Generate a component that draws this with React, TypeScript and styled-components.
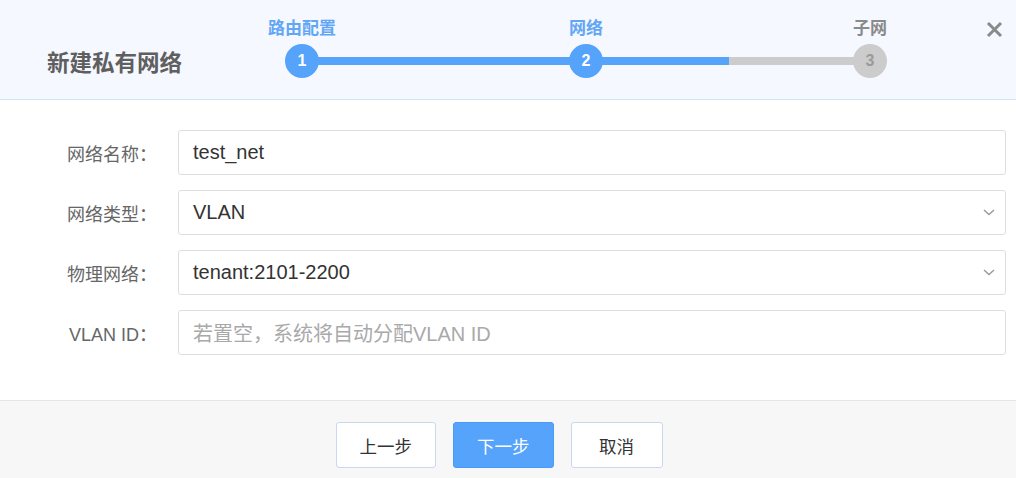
import React from "react";
import styled, { createGlobalStyle } from "styled-components";

const GlobalStyle = createGlobalStyle`
  html, body { margin: 0; padding: 0; background: #ffffff; }
  body { font-family: "Liberation Sans", "Noto Sans CJK SC", sans-serif; }
  * { box-sizing: border-box; }
`;

const BLUE = "#55a3fb";

const Dialog = styled.div`
  width: 1016px;
  height: 478px;
  display: flex;
  flex-direction: column;
  background: #ffffff;
  overflow: hidden;
`;

const Header = styled.div`
  height: 100px;
  flex: none;
  display: flex;
  align-items: flex-end;
  padding: 0 0 21px 47px;
  background: #f5f8ff;
  border-bottom: 1px solid #d3e1f5;
`;

const Title = styled.div`
  width: 238px;
  line-height: 34px;
  font-size: 22.5px;
  font-weight: 700;
  color: #5f5f5f;
  font-family: "Noto Sans CJK SC", sans-serif;
`;

const Stepper = styled.div`
  width: 602px;
  display: flex;
  align-items: flex-end;
`;

const Step = styled.div`
  width: 34px;
  flex: none;
  display: flex;
  flex-direction: column;
  align-items: center;
  gap: 7px;
`;

const StepLabel = styled.div<{ $active: boolean }>`
  white-space: nowrap;
  font-family: "Noto Sans CJK SC", sans-serif;
  font-size: 17px;
  line-height: 20px;
  font-weight: 700;
  color: ${(p) => (p.$active ? "#62a6f6" : "#8a8a8a")};
`;

const Circle = styled.div<{ $active: boolean }>`
  width: 34px;
  height: 34px;
  border-radius: 50%;
  display: flex;
  align-items: center;
  justify-content: center;
  font-family: "Liberation Sans", sans-serif;
  font-size: 16px;
  font-weight: 700;
  background: ${(p) => (p.$active ? BLUE : "#cccccc")};
  color: ${(p) => (p.$active ? "#ffffff" : "#9a9a9a")};
`;

const Connector = styled.div<{ $fill: number }>`
  flex: 1;
  height: 8px;
  margin: 0 -1px 13px;
  background: linear-gradient(
    to right,
    ${BLUE} 0%,
    ${BLUE} ${(p) => p.$fill}%,
    #cccccc ${(p) => p.$fill}%,
    #cccccc 100%
  );
`;

const CloseButton = styled.button`
  align-self: flex-start;
  margin: 20px 13px 0 auto;
  width: 18px;
  height: 18px;
  padding: 0;
  border: none;
  background: transparent;
  display: flex;
  align-items: center;
  justify-content: center;
  cursor: pointer;
`;

const Body = styled.div`
  flex: 1;
  display: flex;
  flex-direction: column;
  gap: 15px;
  padding: 30px 10px 0 0;
`;

const Row = styled.div`
  display: grid;
  grid-template-columns: 157px 1fr;
  column-gap: 21px;
  align-items: center;
`;

const Label = styled.label`
  text-align: right;
  font-family: "Liberation Sans", "Noto Sans CJK SC", sans-serif;
  font-size: 18px;
  color: #666666;
  white-space: nowrap;
`;

const Field = styled.div`
  position: relative;
  height: 45px;
  border: 1px solid #dedede;
  border-radius: 3px;
  background: #ffffff;
  display: flex;
  align-items: center;
  padding: 0 14px;
  font-family: "Liberation Sans", "Noto Sans CJK SC", sans-serif;
  font-size: 20px;
`;

const Value = styled.span<{ $placeholder?: boolean }>`
  flex: 1;
  color: ${(p) => (p.$placeholder ? "#a9a9a9" : "#333333")};
  white-space: nowrap;
`;

const Chevron = styled.svg`
  flex: none;
  margin-right: -4px;
`;

const Footer = styled.div`
  height: 78px;
  flex: none;
  display: flex;
  justify-content: center;
  align-items: flex-start;
  gap: 17px;
  padding: 21px 18px 0 0;
  background: #f7f7f7;
  border-top: 1px solid #e6e6e6;
`;

const Button = styled.button<{ $primary?: boolean }>`
  height: 46px;
  min-width: 92px;
  padding: 0 23px;
  border-radius: 3px;
  font-family: "Noto Sans CJK SC", sans-serif;
  font-size: 17.5px;
  border: 1px solid ${(p) => (p.$primary ? "#4b9af5" : "#c9d8ee")};
  background: ${(p) => (p.$primary ? BLUE : "#ffffff")};
  color: ${(p) => (p.$primary ? "#ffffff" : "#333333")};
  cursor: pointer;
`;

const steps = [
  { label: "路由配置", n: 1, active: true },
  { label: "网络", n: 2, active: true },
  { label: "子网", n: 3, active: false },
];

const fields = [
  { label: "网络名称：", value: "test_net" },
  { label: "网络类型：", value: "VLAN", select: true },
  { label: "物理网络：", value: "tenant:2101-2200", select: true },
  { label: "VLAN ID：", value: "若置空，系统将自动分配VLAN ID", placeholder: true },
];

export default function App() {
  return (
    <>
      <GlobalStyle />
      <Dialog>
        <Header>
          <Title>新建私有网络</Title>
          <Stepper>
            {steps.map((s, i) => (
              <React.Fragment key={s.n}>
                {i > 0 && <Connector $fill={i === 1 ? 100 : 50.5} />}
                <Step>
                  <StepLabel $active={s.active}>{s.label}</StepLabel>
                  <Circle $active={s.active}>{s.n}</Circle>
                </Step>
              </React.Fragment>
            ))}
          </Stepper>
          <CloseButton aria-label="close">
            <svg width="17" height="17" viewBox="0 0 17 17">
              <path d="M2 2 L15 15 M15 2 L2 15" stroke="#8a8a8a" strokeWidth="3" strokeLinecap="butt" />
            </svg>
          </CloseButton>
        </Header>
        <Body>
          {fields.map((f) => (
            <Row key={f.label}>
              <Label>{f.label}</Label>
              <Field>
                <Value $placeholder={f.placeholder}>{f.value}</Value>
                {f.select && (
                  <Chevron width="12" height="7" viewBox="0 0 12 7">
                    <path d="M1 1 L6 5.5 L11 1" fill="none" stroke="#9a9a9a" strokeWidth="1.4" />
                  </Chevron>
                )}
              </Field>
            </Row>
          ))}
        </Body>
        <Footer>
          <Button>上一步</Button>
          <Button $primary>下一步</Button>
          <Button>取消</Button>
        </Footer>
      </Dialog>
    </>
  );
}
